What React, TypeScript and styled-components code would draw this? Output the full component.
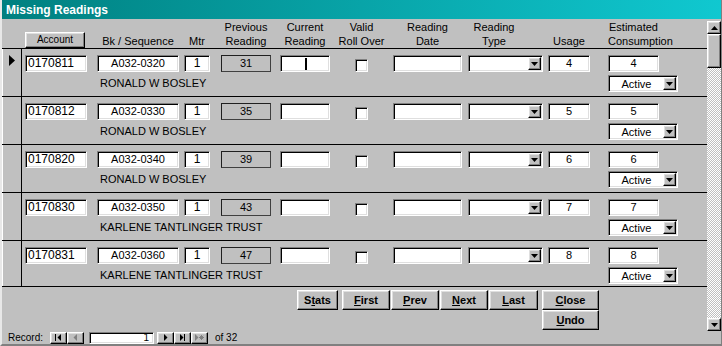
import React from "react";
import styled, { createGlobalStyle, css } from "styled-components";

const GlobalStyle = createGlobalStyle`
  * { box-sizing: border-box; }
  html, body { margin: 0; padding: 0; background: #c0c0c0; }
  body { font-family: "Liberation Sans", Arial, sans-serif; color: #000; }
`;

const raised = css`
  background: #c0c0c0;
  border: 1px solid;
  border-color: #fff #000 #000 #fff;
  box-shadow: inset -1px -1px #808080, inset 1px 1px #dfdfdf;
`;

const sunken = css`
  background: #fff;
  border: 1px solid;
  border-color: #808080 #fff #fff #808080;
  box-shadow: inset 1px 1px #000, inset -1px -1px #dfdfdf;
`;

const COLUMNS =
  "3px 62px 10px 82px 5px 26px 11px 50px 9px 50px 63px 69px 6px 75px 5px 42px 18px 70px";

interface IReading {
  account: string;
  sequence: string;
  meter: string;
  previous: string;
  usage: string;
  name: string;
}

const readings: IReading[] = [
  { account: "0170811", sequence: "A032-0320", meter: "1", previous: "31", usage: "4", name: "RONALD W BOSLEY" },
  { account: "0170812", sequence: "A032-0330", meter: "1", previous: "35", usage: "5", name: "RONALD W BOSLEY" },
  { account: "0170820", sequence: "A032-0340", meter: "1", previous: "39", usage: "6", name: "RONALD W BOSLEY" },
  { account: "0170830", sequence: "A032-0350", meter: "1", previous: "43", usage: "7", name: "KARLENE TANTLINGER TRUST" },
  { account: "0170831", sequence: "A032-0360", meter: "1", previous: "47", usage: "8", name: "KARLENE TANTLINGER TRUST" },
];

const DownArrow = () => (
  <svg width="7" height="4" viewBox="0 0 7 4">
    <polygon points="0,0 7,0 3.5,4" fill="#000" />
  </svg>
);

const UpArrow = () => (
  <svg width="7" height="4" viewBox="0 0 7 4">
    <polygon points="0,4 7,4 3.5,0" fill="#000" />
  </svg>
);

type NavKind = "first" | "prev" | "next" | "last" | "new";

const NavIcon: React.FC<{ kind: NavKind; disabled?: boolean }> = ({ kind, disabled }) => {
  const c = disabled ? "#808080" : "#000";
  return (
    <svg width="9" height="7" viewBox="0 0 9 7">
      {kind === "first" && (
        <>
          <rect x="1" y="0" width="1" height="7" fill={c} />
          <polygon points="7,0 7,7 3.5,3.5" fill={c} />
        </>
      )}
      {kind === "prev" && <polygon points="6,0 6,7 2.5,3.5" fill={c} />}
      {kind === "next" && <polygon points="3,0 3,7 6.5,3.5" fill={c} />}
      {kind === "last" && (
        <>
          <polygon points="2,0 2,7 5.5,3.5" fill={c} />
          <rect x="6" y="0" width="1" height="7" fill={c} />
        </>
      )}
      {kind === "new" && (
        <>
          <polygon points="0,0 0,7 3.5,3.5" fill={c} />
          <path d="M6.5 1v5M4 3.5h5M4.8 1.8l3.4 3.4M8.2 1.8l-3.4 3.4" stroke={c} strokeWidth="1" />
        </>
      )}
    </svg>
  );
};

const Combo: React.FC<{ value?: string; area: string; width: number }> = ({ value, area, width }) => (
  <ComboBox $area={area} $w={width}>
    <ComboText>{value}</ComboText>
    <DropButton>
      <DownArrow />
    </DropButton>
  </ComboBox>
);

const ReadingRow: React.FC<{ reading: IReading; current?: boolean }> = ({ reading, current }) => (
  <Row>
    <RecordSelector>
      {current && (
        <svg width="7" height="11" viewBox="0 0 7 11">
          <polygon points="0,0 0,11 6,5.5" fill="#000" />
        </svg>
      )}
    </RecordSelector>
    <RowGrid>
      <TextBox $area="acct" $align="left" $size={12}>
        {reading.account}
      </TextBox>
      <TextBox $area="bk">{reading.sequence}</TextBox>
      <TextBox $area="mtr" $size={12}>
        {reading.meter}
      </TextBox>
      <FlatBox $area="prev">{reading.previous}</FlatBox>
      <TextBox $area="cur">{current && <Caret />}</TextBox>
      <CheckBox />
      <TextBox $area="date" />
      <Combo area="type" width={75} />
      <TextBox $area="usage">{reading.usage}</TextBox>
      <TextBox $area="est" $w={51}>
        {reading.usage}
      </TextBox>
      <Name>{reading.name}</Name>
      <Combo area="status" width={70} value="Active" />
    </RowGrid>
  </Row>
);

export default function App() {
  return (
    <>
      <GlobalStyle />
      <Window>
        <TitleBar>Missing Readings</TitleBar>
        <Body>
          <Form>
            <Header>
              <AccountButton>Account</AccountButton>
              <Label $area="bk">Bk / Sequence</Label>
              <Label $area="mtr">Mtr</Label>
              <Label $area="prev">
                Previous
                <br />
                Reading
              </Label>
              <Label $area="cur">
                Current
                <br />
                Reading
              </Label>
              <Label $area="valid">
                Valid
                <br />
                Roll Over
              </Label>
              <Label $area="date">
                Reading
                <br />
                Date
              </Label>
              <Label $area="type" $w={52}>
                Reading
                <br />
                Type
              </Label>
              <Label $area="usage">Usage</Label>
              <Label $area="est" $w={51}>
                Estimated
                <br />
                Consumption
              </Label>
            </Header>
            <Detail>
              {readings.map((r, i) => (
                <ReadingRow key={r.account} reading={r} current={i === 0} />
              ))}
            </Detail>
            <Footer>
              <FormButton $w={41}>
                S<u>t</u>ats
              </FormButton>
              <ButtonGroup>
                <FormButton $w={48}>
                  <u>F</u>irst
                </FormButton>
                <FormButton $w={48}>
                  <u>P</u>rev
                </FormButton>
                <FormButton $w={48}>
                  <u>N</u>ext
                </FormButton>
                <FormButton $w={49}>
                  <u>L</u>ast
                </FormButton>
              </ButtonGroup>
              <ButtonStack>
                <FormButton $w={57}>
                  <u>C</u>lose
                </FormButton>
                <FormButton $w={57}>
                  <u>U</u>ndo
                </FormButton>
              </ButtonStack>
            </Footer>
          </Form>
          <ScrollBar>
            <ScrollButton>
              <UpArrow />
            </ScrollButton>
            <Thumb />
            <Track />
            <ScrollButton>
              <DownArrow />
            </ScrollButton>
          </ScrollBar>
        </Body>
        <NavBar>
          <NavLabel>Record:</NavLabel>
          <NavButton>
            <NavIcon kind="first" />
          </NavButton>
          <NavButton>
            <NavIcon kind="prev" disabled />
          </NavButton>
          <RecordBox>1</RecordBox>
          <NavButton>
            <NavIcon kind="next" />
          </NavButton>
          <NavButton>
            <NavIcon kind="last" />
          </NavButton>
          <NavButton>
            <NavIcon kind="new" disabled />
          </NavButton>
          <NavCount>of 32</NavCount>
        </NavBar>
      </Window>
    </>
  );
}

const Window = styled.div`
  width: 722px;
  height: 346px;
  display: flex;
  flex-direction: column;
  background: #c0c0c0;
  border-left: 2px solid #e8e8e8;
  border-right: 1px solid #808080;
  border-bottom: 2px solid #808080;
  overflow: hidden;
`;

const TitleBar = styled.div`
  height: 19px;
  flex-shrink: 0;
  padding: 2px 0 0 4px;
  line-height: 16px;
  font-size: 12px;
  font-weight: bold;
  color: #fff;
  background: linear-gradient(90deg, #008080 0%, #10c8d0 100%);
`;

const Body = styled.div`
  display: flex;
  height: 312px;
`;

const Form = styled.div`
  width: 705px;
  display: flex;
  flex-direction: column;
`;

const Header = styled.div`
  height: 30px;
  flex-shrink: 0;
  padding-left: 20px;
  border-bottom: 1px solid #000;
  display: grid;
  grid-template-columns: ${COLUMNS};
  grid-template-areas: ". acct . bk . mtr . prev . cur valid date . type . usage . est";
  align-items: end;
`;

const Label = styled.div<{ $area: string; $w?: number }>`
  grid-area: ${({ $area }) => $area};
  justify-self: ${({ $w }) => ($w ? "start" : "stretch")};
  width: ${({ $w }) => ($w ? `${$w}px` : "auto")};
  text-align: center;
  white-space: nowrap;
  font-size: 11px;
  line-height: 14px;
`;

const AccountButton = styled.div`
  ${raised};
  grid-area: acct;
  width: 60px;
  height: 16px;
  font-size: 10px;
  line-height: 14px;
  text-align: center;
`;

const Detail = styled.div`
  height: 237px;
  flex-shrink: 0;
  overflow: hidden;
`;

const Row = styled.div`
  height: 48px;
  display: flex;
  border-bottom: 1px solid #000;
`;

const RecordSelector = styled.div`
  width: 20px;
  flex-shrink: 0;
  border-right: 1px solid #000;
  box-shadow: inset 1px 0 #fff;
  padding: 3px 0 0 7px;
`;

const RowGrid = styled.div`
  display: grid;
  grid-template-columns: ${COLUMNS};
  grid-template-rows: 17px 17px;
  grid-template-areas:
    ". acct . bk . mtr . prev . cur valid date . type . usage . est"
    ". . . name name name name name name name . . . . . . . status";
  row-gap: 3px;
  padding-top: 6px;
`;

const TextBox = styled.div<{ $area: string; $align?: "left" | "center"; $w?: number; $size?: number }>`
  ${sunken};
  position: relative;
  grid-area: ${({ $area }) => $area};
  width: ${({ $w }) => ($w ? `${$w}px` : "auto")};
  height: 17px;
  padding: 0 2px;
  font-size: ${({ $size }) => $size ?? 11}px;
  line-height: 15px;
  text-align: ${({ $align }) => $align ?? "center"};
  white-space: nowrap;
  overflow: hidden;
`;

const FlatBox = styled.div<{ $area: string }>`
  grid-area: ${({ $area }) => $area};
  height: 17px;
  border: 1px solid;
  border-color: #202020 #404040 #404040 #202020;
  font-size: 11px;
  line-height: 15px;
  text-align: center;
`;

const Caret = styled.span`
  position: absolute;
  left: 24px;
  top: 2px;
  width: 2px;
  height: 12px;
  background: #000;
`;

const CheckBox = styled.div`
  ${sunken};
  grid-area: valid;
  justify-self: center;
  align-self: end;
  width: 13px;
  height: 13px;
`;

const ComboBox = styled.div<{ $area: string; $w: number }>`
  ${sunken};
  grid-area: ${({ $area }) => $area};
  width: ${({ $w }) => $w}px;
  height: 17px;
  padding: 1px;
  display: flex;
`;

const ComboText = styled.div`
  flex: 1;
  font-size: 11px;
  line-height: 14px;
  text-align: center;
`;

const DropButton = styled.div`
  ${raised};
  width: 13px;
  display: flex;
  align-items: center;
  justify-content: center;
`;

const Name = styled.div`
  grid-area: name;
  padding-left: 3px;
  font-size: 11px;
  line-height: 17px;
  white-space: nowrap;
`;

const Footer = styled.div`
  flex: 1;
  border-top: 1px solid #000;
  display: flex;
  align-items: flex-start;
  gap: 4px;
  padding: 3px 0 0 295px;
`;

const ButtonGroup = styled.div`
  display: flex;
  gap: 1px;
`;

const ButtonStack = styled.div`
  display: flex;
  flex-direction: column;
`;

const FormButton = styled.div<{ $w: number }>`
  ${raised};
  width: ${({ $w }) => $w}px;
  height: 20px;
  font-size: 11px;
  font-weight: bold;
  line-height: 18px;
  text-align: center;
`;

const ScrollBar = styled.div`
  width: 14px;
  display: flex;
  flex-direction: column;
  padding-top: 2px;
`;

const ScrollButton = styled.div`
  ${raised};
  height: 13px;
  flex-shrink: 0;
  display: flex;
  align-items: center;
  justify-content: center;
`;

const Thumb = styled.div`
  ${raised};
  height: 34px;
  flex-shrink: 0;
`;

const Track = styled.div`
  flex: 1;
  background: repeating-conic-gradient(#fff 0 25%, #c0c0c0 0 50%) 0 0 / 2px 2px;
`;

const NavBar = styled.div`
  height: 13px;
  display: flex;
  align-items: center;
  padding-left: 6px;
  font-size: 10px;
`;

const NavLabel = styled.span`
  width: 42px;
`;

const NavButton = styled.div`
  ${raised};
  width: 17px;
  height: 12px;
  display: flex;
  align-items: center;
  justify-content: center;
`;

const RecordBox = styled.div`
  ${sunken};
  width: 65px;
  height: 12px;
  margin: 0 3px 0 5px;
  padding-right: 4px;
  text-align: right;
  line-height: 10px;
  font-size: 10px;
`;

const NavCount = styled.span`
  margin-left: 7px;
`;
